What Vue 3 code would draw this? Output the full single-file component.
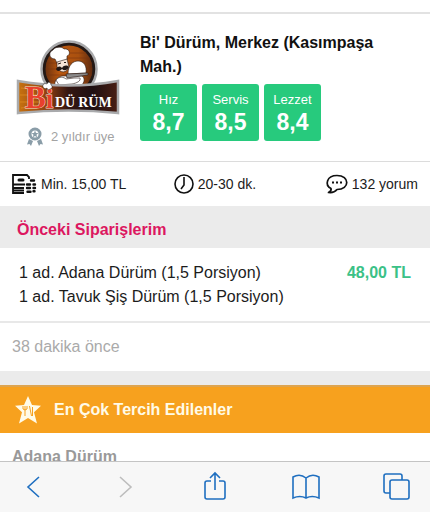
<script setup>
const ratings = [
  { label: 'Hız', value: '8,7' },
  { label: 'Servis', value: '8,5' },
  { label: 'Lezzet', value: '8,4' },
]
const orderItems = ['1 ad. Adana Dürüm (1,5 Porsiyon)', '1 ad. Tavuk Şiş Dürüm (1,5 Porsiyon)']
</script>

<template>
  <div class="screen">
    <main class="page">
      <header class="restaurant">
        <div class="identity">
          <svg class="logo" viewBox="0 0 104 76" role="img" aria-label="Bi Dürüm">
            <defs>
              <linearGradient id="wood" x1="0" x2="1" y1="0" y2="0">
                <stop offset="0" stop-color="#6d3210" />
                <stop offset="0.3" stop-color="#b9570f" />
                <stop offset="0.7" stop-color="#a9500f" />
                <stop offset="1" stop-color="#5d2a0f" />
              </linearGradient>
              <linearGradient id="plank" x1="0" x2="1" y1="0" y2="0">
                <stop offset="0" stop-color="#c9730f" />
                <stop offset="0.3" stop-color="#8c3d12" />
                <stop offset="0.5" stop-color="#351712" />
                <stop offset="0.75" stop-color="#1f1012" />
                <stop offset="1" stop-color="#4a1f14" />
              </linearGradient>
            </defs>
            <circle cx="53" cy="30" r="27.500" fill="#231815" stroke="#a9aaac" stroke-width="2.500" />
            <circle cx="53" cy="30" r="23.500" fill="url(#wood)" />
            <g stroke="#7a3510" stroke-width="0.800" opacity="0.700">
              <path d="M36 14h34M32 19h42M30 24h46M30 30h46M30 36h46M33 42h40" />
            </g>
            <g fill="#fff" stroke="#2a1a14" stroke-width="0.600">
              <path d="M39 47c-1-5 2-9 7-10l20 0c3 2 3 6-1 10z" />
              <path d="M39 20c-6 0-7-7-2-9 1-3 9-4 11-1 6-1 7 6 3 7l0 4-10 3z" />
              <path d="M41 23l10-3 2 8c-2 6-9 7-12 0z" fill="#f7e4d6" />
              <path d="M52 35c0-9 5-13 10-13 6 0 9 5 8 12z" />
              <path d="M50 35l22-1v2l-21 3z" fill="#8b8a8a" />
              <path d="M40 41c3-4 8-3 10-1l8-1 6 0c1 3-3 5-8 6l-13 1z" />
            </g>
            <path d="M40 30c2-3 4-3 6-1 2-3 5-3 7-1-2 4-5 4-7 2-2 2-5 3-6 0z" fill="#231815" />
            <path d="M42 25l3-1M48 23.500l2 0" stroke="#231815" />
            <path d="M2 42Q53 51 102 42V74Q53 69 2 74Z" fill="url(#plank)" stroke="#a9aaac" stroke-width="2.500" />
            <path d="M5 49l18 2M4 56h16M4 63h20M5 69l18-2" stroke="#dd8a20" stroke-width="0.800" />
            <text class="logo-bi" x="9" y="69">B<tspan class="logo-i">i</tspan></text>
            <text class="logo-name" x="39" y="68">DÜ<tspan dx="3">RÜM</tspan></text>
            <path d="M27 48c-1-3 2-4 4-3 1-3 4-2 4 1 2 1 1 4-1 4-1 1-3 1-3-1-1 1-3 1-4-1z" fill="#fff" stroke="#231815" stroke-width="0.500" />
          </svg>
          <p class="member">
            <svg class="award" viewBox="0 0 18 20" aria-hidden="true">
              <circle cx="9" cy="7" r="5" fill="#fff" stroke="#8a9da8" stroke-width="3" />
              <path d="M9 3.500l1 2.400 2.500.2-2 1.600.7 2.500L9 8.900l-2.200 1.300.7-2.500-2-1.600L8 5.900z" fill="#8a9da8" />
              <path d="M3 12l4 2-2 5-1.500-2L1 17.500zM15 12l-4 2 2 5 1.500-2 2.500.5z" fill="#8a9da8" />
            </svg>
            <span>2 yıldır üye</span>
          </p>
        </div>
        <div class="summary">
          <h1>Bi' Dürüm, Merkez (Kasımpaşa Mah.)</h1>
          <dl class="ratings">
            <div v-for="r in ratings" :key="r.label" class="rating">
              <dt>{{ r.label }}</dt>
              <dd>{{ r.value }}</dd>
            </div>
          </dl>
        </div>
      </header>

      <ul class="facts">
        <li>
          <svg class="coins" viewBox="0 0 25 20" fill="none" stroke="#111" stroke-width="1.800" aria-hidden="true">
            <path d="M12 19H1V1h14l2 2v2M1 10.500h12M1 14h11M1 16.500h11" />
            <path d="M7 6h4" stroke-width="3" stroke-linecap="round" />
            <g stroke-linecap="round" stroke-width="2.400">
              <path d="M19 6.500h3M15 10.500h3M21.500 10.500h1.500M15 14h3M21.500 14h1.500M15.500 17.800h3M21.500 17.200h1" />
            </g>
          </svg>
          <span>Min. 15,00 TL</span>
        </li>
        <li>
          <svg class="clock" viewBox="0 0 20 20" fill="none" stroke="#111" stroke-width="1.600" aria-hidden="true">
            <circle cx="10" cy="10" r="9" />
            <path d="M10 3v8l-3 4" />
          </svg>
          <span>20-30 dk.</span>
        </li>
        <li>
          <svg class="bubble" viewBox="0 0 22 20" fill="none" stroke="#111" stroke-width="1.700" aria-hidden="true">
            <path d="M5 14.500C-1.500 11 .5 1.500 11 1.500c13 0 13 14 0 14-2 2.500-5 3.500-8.500 3 2-1 3-2.500 2.500-4z" stroke-linejoin="round" />
            <path d="M6 8.500h2M10 8.500h2M14 8.500h2" stroke-width="2" />
          </svg>
          <a href="#yorumlar">132 yorum</a>
        </li>
      </ul>

      <section class="orders">
        <h2>Önceki Siparişlerim</h2>
        <div class="order">
          <ul>
            <li v-for="item in orderItems" :key="item">{{ item }}</li>
          </ul>
          <strong>48,00 TL</strong>
        </div>
        <p class="ago">38 dakika önce</p>
      </section>

      <section class="popular">
        <h2>
          <svg class="star" viewBox="0 0 28 30" aria-hidden="true">
            <path d="M14 1l4 9 9 .7-7 6.500 3 11.300-9-5.500-9 5.500 3-11.300L1 10.700l9-.7z" fill="#fffbe8" />
            <path d="M9 11v3q2 2 4 0v-3M11 11v10M15.500 11l2 10M18.500 12v9" fill="none" stroke="#f7a11e" stroke-width="1" />
          </svg>
          <span>En Çok Tercih Edilenler</span>
        </h2>
        <h3>Adana Dürüm</h3>
      </section>
    </main>

    <nav class="toolbar" aria-label="Tarayıcı">
      <button type="button" aria-label="Geri">
        <svg viewBox="0 0 28 28"><path d="M19 4L8 14l11 10" /></svg>
      </button>
      <button type="button" aria-label="İleri" disabled>
        <svg viewBox="0 0 28 28"><path d="M9 4l11 10L9 24" /></svg>
      </button>
      <button type="button" aria-label="Paylaş">
        <svg viewBox="0 0 28 28"><path d="M10 8H6q-2 0-2 2v14q0 2 2 2h16q2 0 2-2V10q0-2-2-2h-4M14 17V0M9 5l5-5 5 5" /></svg>
      </button>
      <button type="button" aria-label="Yer imleri">
        <svg viewBox="0 0 28 28"><path d="M14 5v20M14 5Q8 0 1 4v21q7-3 13 0 6-3 13 0V4q-7-4-13 1z" /></svg>
      </button>
      <button type="button" aria-label="Sekmeler">
        <svg viewBox="0 0 28 28"><path d="M8 20H4q-2 0-2-2V3q0-2 2-2h14q2 0 2 2v4" /><rect x="8" y="7" width="19" height="19" rx="2" /></svg>
      </button>
    </nav>
  </div>
</template>

<style>
body {
  margin: 0;
  background: #fff;
}
</style>

<style scoped>
.screen {
  display: flex;
  flex-direction: column;
  height: 100vh;
  font-family: "Liberation Sans", Arial, sans-serif;
  color: #1c1c1c;
}
h1, h2, h3, p, ul, dl, dd {
  margin: 0;
  padding: 0;
}
ul {
  list-style: none;
}
svg {
  display: block;
  flex: none;
  overflow: visible;
}
.page {
  flex: 1;
  min-height: 0;
  overflow: hidden;
  padding-top: 12px;
}
.restaurant {
  display: flex;
  gap: 20px;
  padding: 17px 16px 14px;
  border-top: 2px solid #e2e2e2;
  border-bottom: 1px solid #dcdcdc;
}
.identity {
  padding-top: 8px;
}
.logo {
  width: 104px;
  height: 76px;
}
.logo-bi {
  font: bold 31px "Liberation Serif", serif;
  fill: #e8402c;
  stroke: #fbe3d4;
  stroke-width: 1px;
  paint-order: stroke;
}
.logo-i {
  font-size: 27px;
}
.logo-name {
  font: bold 14px "Liberation Serif", serif;
  fill: #fff;
}
.member {
  display: flex;
  align-items: center;
  gap: 7px;
  margin-top: 12px;
  padding-left: 10px;
  font-size: 13px;
  line-height: 20px;
  color: #a3a3a3;
}
.award {
  width: 18px;
  height: 20px;
}
.summary {
  flex: 1;
}
h1 {
  max-width: 260px;
  font-size: 16px;
  line-height: 24px;
  color: #111;
}
.ratings {
  display: flex;
  gap: 5px;
  margin-top: 5px;
}
.rating {
  box-sizing: border-box;
  width: 57px;
  padding: 6px 0 7px;
  border-radius: 3px;
  background: #27ca7d;
  color: #fff;
  text-align: center;
}
.rating dt {
  font-size: 13px;
  line-height: 20px;
}
.rating dd {
  font-size: 23px;
  font-weight: bold;
  line-height: 24px;
}
.facts {
  display: grid;
  grid-template-columns: 1fr 1fr 1fr;
  padding: 0 12px;
  font-size: 14px;
  line-height: 44px;
}
.facts li {
  display: flex;
  align-items: center;
  gap: 4px;
}
.facts li:nth-child(2) {
  justify-content: center;
}
.facts li:last-child {
  justify-content: flex-end;
}
.facts a {
  color: inherit;
  text-decoration: none;
}
.coins {
  width: 25px;
  height: 20px;
}
.clock {
  width: 20px;
  height: 20px;
}
.bubble {
  width: 22px;
  height: 20px;
}
.orders h2 {
  padding: 6px 17px 0;
  background: #ebebeb;
  color: #dc1760;
  font-size: 16px;
  line-height: 36px;
}
.order {
  display: flex;
  justify-content: space-between;
  padding: 13px 19px 12px;
  border-bottom: 2px solid #e8e8e8;
  font-size: 16px;
  line-height: 24px;
}
.order strong {
  color: #3bc187;
}
.ago {
  padding: 0 12px;
  font-size: 16px;
  line-height: 48px;
  color: #aaa;
}
.popular {
  border-top: 14px solid #ebebeb;
}
.popular h2 {
  display: flex;
  align-items: center;
  gap: 12px;
  padding: 0 14px;
  border-top: 2px solid #dda450;
  background: #f7a11e;
  color: #fffbe8;
  font-size: 16px;
  line-height: 46px;
}
.star {
  width: 28px;
  height: 30px;
}
.popular h3 {
  padding: 12px;
  font-size: 16px;
  line-height: 24px;
  color: #999;
}
.toolbar {
  display: flex;
  justify-content: space-between;
  padding: 11px 20px;
  border-top: 1px solid #c4c4c4;
  background: #f7f7f7;
}
.toolbar button {
  padding: 0;
  border: 0;
  background: none;
  color: #1f6fc0;
}
.toolbar button:disabled {
  color: #bdbdbd;
}
.toolbar svg {
  width: 28px;
  height: 28px;
  fill: none;
  stroke: currentColor;
  stroke-width: 1.6;
}
</style>
